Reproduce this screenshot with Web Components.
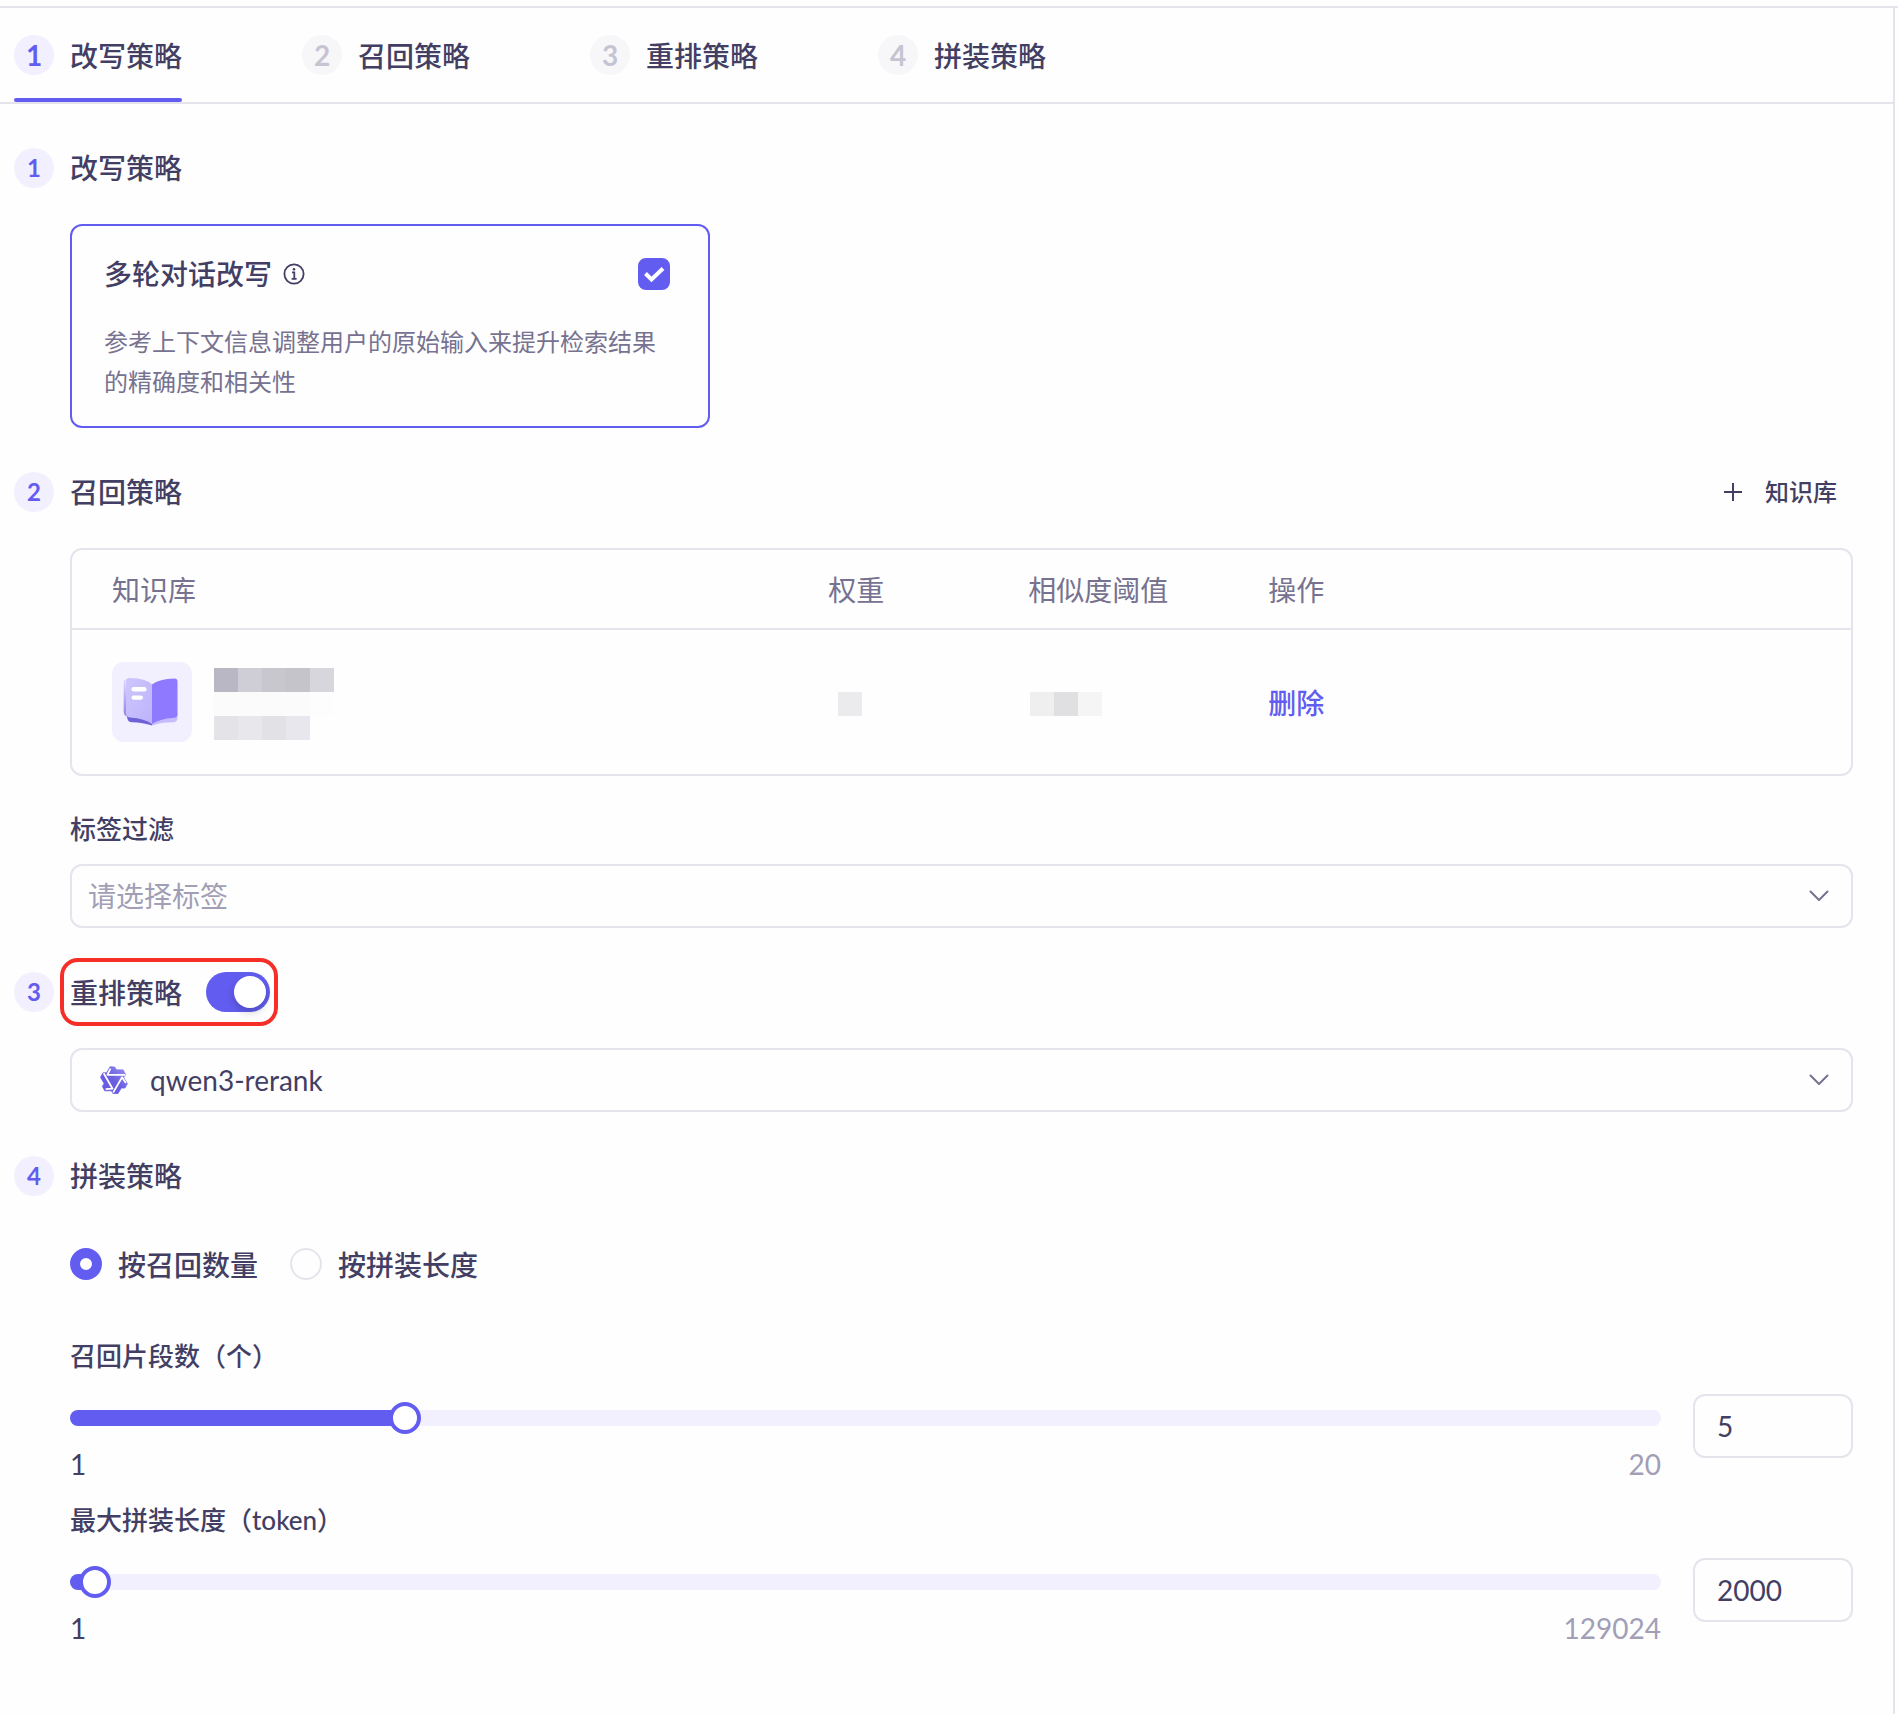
<!DOCTYPE html>
<html lang="zh-CN">
<head>
<meta charset="utf-8">
<meta name="viewport" content="width=device-width, initial-scale=1">
<title>检索策略</title>
<style>
  :root {
    --primary: #625df0;
    --primary-soft: #f2f0fe;
    --ink: #433f64;
    --ink-2: #767290;
    --ink-3: #a19eb5;
    --line: #e5e4ec;
    --surface: #fefefe;
  }
  html { background: var(--surface); }
  body {
    margin: 0;
    color: var(--ink);
    font-family: Lato, "Noto Sans CJK SC", sans-serif;
    font-size: 28px;
    line-height: 40px;
  }
</style>
</head>
<body>
<strategy-page>
  <strategy-tabs slot="tabs">
    <strategy-tab step="1" active>改写策略</strategy-tab>
    <strategy-tab step="2">召回策略</strategy-tab>
    <strategy-tab step="3">重排策略</strategy-tab>
    <strategy-tab step="4">拼装策略</strategy-tab>
  </strategy-tabs>

  <strategy-section step="1" id="step-1">
    <span slot="title">改写策略</span>
    <option-card>
      <span slot="title">多轮对话改写</span>
      参考上下文信息调整用户的原始输入来提升检索结果的精确度和相关性
    </option-card>
  </strategy-section>

  <strategy-section step="2" id="step-2">
    <span slot="title">召回策略</span>
    <add-button slot="action">知识库</add-button>
    <knowledge-table></knowledge-table>
    <select-field label="标签过滤" value="请选择标签" placeholder></select-field>
  </strategy-section>

  <strategy-section step="3" id="step-3">
    <switch-title slot="title">重排策略</switch-title>
    <select-field name="重排策略" value="qwen3-rerank"><qwen-logo slot="icon"></qwen-logo></select-field>
  </strategy-section>

  <strategy-section step="4" id="step-4">
    <span slot="title">拼装策略</span>
    <mode-radios></mode-radios>
    <slider-field label="召回片段数（个）" min="1" max="20" value="5"></slider-field>
    <slider-field label="最大拼装长度（token）" min="1" max="129024" value="2000"></slider-field>
  </strategy-section>
</strategy-page>

<script>
const base = '*,*::before,*::after{box-sizing:border-box}';

function define(name, render, setup) {
  customElements.define(name, class extends HTMLElement {
    connectedCallback() {
      if (this.shadowRoot) return;
      const root = this.attachShadow({ mode: 'open' });
      const template = document.createElement('template');
      template.innerHTML = render(this);
      root.append(template.content.cloneNode(true));
      if (setup) setup(root, this);
    }
  });
}

define('strategy-page', () => `
  <style>${base}
    :host { display: block; padding-top: 6px; }
    .frame { border-top: 2px solid var(--line); }
    .panel { margin-right: 3px; border-right: 2px solid var(--line); min-height: calc(100vh - 8px); }
    main { display: flex; flex-direction: column; gap: 44px; padding: 44px 40px 44px 14px; }
  </style>
  <div class="frame"><div class="panel">
    <slot name="tabs"></slot>
    <main><slot></slot></main>
  </div></div>`);

define('strategy-tabs', () => `
  <style>${base}
    :host { display: block; border-bottom: 2px solid var(--line); }
    nav { display: flex; gap: 120px; padding: 0 14px; }
  </style>
  <nav><slot></slot></nav>`);

define('step-badge', () => `
  <style>${base}
    :host {
      display: flex; align-items: center; justify-content: center; flex: none;
      width: 40px; height: 40px; border-radius: 50%;
      background: var(--primary-soft); color: var(--primary);
      font-weight: 700; font-size: 24px; line-height: 40px;
    }
    :host([large]) { font-size: 28px; }
    :host([muted]) { background: #f7f7f9; color: #c6c4d3; }
  </style>
  <slot></slot>`);

define('strategy-tab', el => `
  <style>${base}
    :host { display: block; }
    a {
      position: relative; display: flex; align-items: center; gap: 16px;
      height: 94px; color: inherit; text-decoration: none; font-weight: 500;
    }
    .text { padding-top: 2px; }
    :host([active]) a::after {
      content: ""; position: absolute; left: 0; right: 0; bottom: 0;
      height: 4px; border-radius: 2px; background: var(--primary);
    }
  </style>
  <a href="#step-${el.getAttribute('step')}">
    <step-badge large ${el.hasAttribute('active') ? '' : 'muted'}>${el.getAttribute('step')}</step-badge>
    <span class="text"><slot></slot></span>
  </a>`);

define('strategy-section', el => `
  <style>${base}
    :host { display: block; }
    header { display: flex; align-items: center; gap: 16px; height: 40px; }
    h2 { margin: 0; flex: 1; font-size: 28px; line-height: 42px; font-weight: 500; }
    .body { padding: 36px 0 0 56px; }
  </style>
  <header>
    <step-badge>${el.getAttribute('step')}</step-badge>
    <h2><slot name="title"></slot></h2>
    <slot name="action"></slot>
  </header>
  <div class="body"><slot></slot></div>`);

define('option-card', () => `
  <style>${base}
    :host { display: block; max-width: 640px; }
    label {
      display: block; padding: 28px 38px 24px 32px;
      border: 2px solid var(--primary); border-radius: 12px; cursor: pointer;
    }
    .head { display: flex; align-items: center; gap: 10px; height: 40px; font-weight: 500; }
    .info { width: 24px; height: 24px; margin-right: auto; }
    .tick { display: grid; }
    .tick > * { grid-area: 1 / 1; }
    input {
      appearance: none; margin: 0; width: 32px; height: 32px;
      border: 2px solid var(--line); border-radius: 8px;
    }
    input:checked { background: var(--primary); border-color: var(--primary); }
    .tick svg { width: 32px; height: 32px; pointer-events: none; }
    input:not(:checked) + svg { visibility: hidden; }
    p { margin: 28px -6px 0 0; font-size: 24px; line-height: 40px; color: var(--ink-2); }
  </style>
  <label>
    <span class="head">
      <slot name="title"></slot>
      <svg class="info" viewBox="0 0 24 24" fill="none" stroke="currentColor" stroke-width="1.8">
        <circle cx="12" cy="12" r="9.6"/>
        <path d="M10 10.4h2.3v6.2M9.6 16.8h5"/>
        <circle cx="12" cy="7.2" r="1.3" fill="currentColor" stroke="none"/>
      </svg>
      <span class="tick">
        <input type="checkbox" checked>
        <svg viewBox="0 0 32 32" fill="none" stroke="#fff" stroke-width="4"><path d="M7.5 15.5l6 6L25 10.5"/></svg>
      </span>
    </span>
    <p><slot></slot></p>
  </label>`);

define('add-button', () => `
  <style>${base}
    :host { display: block; }
    button {
      display: flex; align-items: center; gap: 21px; padding: 0 16px 0 0;
      border: 0; background: none; color: inherit; cursor: pointer;
      font: inherit; font-weight: 500; font-size: 24px; line-height: 40px;
    }
    svg { width: 22px; height: 22px; }
  </style>
  <button type="button">
    <svg viewBox="0 0 22 22" stroke="currentColor" stroke-width="2"><path d="M11 2v18M2 11h18"/></svg>
    <slot></slot>
  </button>`);

define('pixel-mask', el => `
  <style>${base}
    :host { display: flex; }
    i { width: 24px; height: 24px; }
  </style>
  ${el.getAttribute('shades').split(' ').map(c => `<i style="background:${c}"></i>`).join('')}`);

define('book-icon', () => `
  <style>:host{display:block;flex:none} svg{display:block;width:80px;height:80px}</style>
  <svg viewBox="0 0 80 80">
    <defs>
      <linearGradient id="page" x1="0" y1="0" x2="1" y2="1">
        <stop offset="0" stop-color="#cdc6fd"/><stop offset="1" stop-color="#bdb3fb"/>
      </linearGradient>
      <linearGradient id="edge" x1="0" y1="0" x2="0" y2="1">
        <stop offset="0" stop-color="#ddd8fe"/><stop offset="1" stop-color="#8f82ea"/>
      </linearGradient>
    </defs>
    <rect width="80" height="80" rx="12" fill="#f2effe"/>
    <path d="M14 51 L15.5 57 Q16.500 60.200 20 60.300 Q31 60.500 40 63.500 L40 60 Z" fill="#6f61d6"/>
    <path d="M65.500 51 V56 Q65.500 60 61.500 60.200 Q48 60.300 40 63.500 L40 59 Z" fill="#c5bcfd"/>
    <path d="M13.500 17 Q11.700 18 11.700 21 V50 Q11.800 53 14.500 54.500 Z" fill="url(#edge)"/>
    <path d="M17 16 Q33 15.600 40 22.500 V62 Q33 56.500 18 55.500 Q14 55 14 51 V19 Q14 16.200 17 16Z" fill="url(#page)"/>
    <path d="M62.500 16.500 Q47 17 40 22.500 V62 Q47 57 62 55.800 Q65.500 55.400 65.500 52 V19.500 Q65.500 16.500 62.500 16.500Z" fill="#8f79ff"/>
    <rect x="19.500" y="25" width="15" height="4.500" rx="2.200" fill="#fff"/>
    <rect x="19.500" y="33.500" width="11.500" height="4.200" rx="2.100" fill="#fff"/>
  </svg>`);

define('knowledge-table', () => `
  <style>${base}
    :host { display: block; }
    table {
      width: 100%; table-layout: fixed; border-collapse: separate; border-spacing: 0;
      border: 2px solid var(--line); border-radius: 12px;
    }
    col.weight { width: 200px; }
    col.threshold { width: 240px; }
    col.action { width: 35%; }
    th, td { padding: 2px 0 0 40px; text-align: left; vertical-align: middle; }
    th { height: 80px; border-bottom: 2px solid var(--line); color: var(--ink-2); font-weight: 400; }
    td { height: 144px; }
    td:first-child { padding-top: 0; }
    .base { display: flex; align-items: center; gap: 22px; }
    .lines { display: flex; flex-direction: column; padding-top: 4px; }
    .weight-mask { padding: 2px 0 0 10px; }
    .threshold-mask { padding: 2px 0 0 2px; }
    a { color: var(--primary); text-decoration: none; font-weight: 500; }
  </style>
  <table>
    <colgroup><col><col class="weight"><col class="threshold"><col class="action"></colgroup>
    <thead><tr><th>知识库</th><th>权重</th><th>相似度阈值</th><th>操作</th></tr></thead>
    <tbody><tr>
      <td><div class="base"><book-icon></book-icon><div class="lines">
        <pixel-mask shades="#b9b7c3 #cfcdd5 #c8c7cd #c5c4ca #d7d6dc"></pixel-mask>
        <pixel-mask shades="#fbfbfc #fbfbfc #fbfbfc #fbfbfc #fdfdfd"></pixel-mask>
        <pixel-mask shades="#e4e3e8 #e8e7ec #e2e1e6 #e8e7ed"></pixel-mask>
      </div></div></td>
      <td><pixel-mask class="weight-mask" shades="#ebebed"></pixel-mask></td>
      <td><pixel-mask class="threshold-mask" shades="#efefef #e0e0e2 #f5f5f5"></pixel-mask></td>
      <td><a href="#step-2">删除</a></td>
    </tr></tbody>
  </table>`);

define('qwen-logo', () => `
  <style>:host{display:block} svg{display:block;width:28px;height:28px}</style>
  <svg viewBox="0 0 24 24">
    <defs>
      <linearGradient id="q" x1="1" y1="0" x2="0" y2="1">
        <stop offset="0" stop-color="#9a93f4"/><stop offset=".5" stop-color="#6a5fe0"/><stop offset="1" stop-color="#6558e8"/>
      </linearGradient>
      <path id="arm" d="M9 2.200 L6.300 7.500 H21.600"/>
    </defs>
    <path fill="url(#q)" d="M12.600 .8 L14.100 3.300 H19.900 L22 7.300 L20.400 9.900 L23.500 15.200 L21.400 18.900 H18.300 L15.300 23.800 H11.200 L9.800 21.300 H4.100 L2 17.600 L3.500 15 L.4 9.600 L2.600 5.800 H5.600 L8.600 .6 Z" stroke="url(#q)" stroke-width=".6" stroke-linejoin="round"/>
    <g fill="none" stroke="#fff" stroke-width="1.500" stroke-linejoin="round">
      <use href="#arm"/>
      <use href="#arm" transform="rotate(120 12 12.200)"/>
      <use href="#arm" transform="rotate(240 12 12.200)"/>
    </g>
  </svg>`);

define('select-field', el => {
  const label = el.getAttribute('label');
  const value = el.getAttribute('value');
  const aria = label ? '' : `aria-label="${el.getAttribute('name')}"`;
  return `
  <style>${base}
    :host { display: block; }
    label { display: block; padding-top: 33px; margin-bottom: 15px; font-size: 26px; font-weight: 500; }
    .box { display: grid; grid-template-columns: auto 1fr auto; align-items: center; }
    select {
      grid-area: 1 / 1 / 2 / 4; appearance: none; width: 100%; height: 64px; margin: 0;
      padding: 0 64px 0 16px; border: 2px solid var(--line); border-radius: 12px;
      background: transparent; color: inherit; font: inherit;
    }
    :host([placeholder]) select { color: var(--ink-3); }
    :host([name]) select { padding-left: 78px; }
    .icon { grid-area: 1 / 1; padding-left: 30px; pointer-events: none; }
    .arrow { grid-area: 1 / 3; width: 24px; height: 24px; margin-right: 22px; color: var(--ink-2); pointer-events: none; }
  </style>
  ${label ? `<label for="field">${label}</label>` : ''}
  <div class="box">
    <select id="field" ${aria}><option>${value}</option></select>
    <span class="icon"><slot name="icon"></slot></span>
    <svg class="arrow" viewBox="0 0 24 24" fill="none" stroke="currentColor" stroke-width="2" stroke-linecap="round" stroke-linejoin="round"><path d="M3.500 7.500l8.500 8.500 8.500-8.500"/></svg>
  </div>`;
});

define('switch-title', () => `
  <style>${base}
    :host { display: flex; }
    label { position: relative; display: flex; align-items: center; gap: 24px; height: 40px; cursor: pointer; }
    label::after {
      content: ""; position: absolute; inset: -14px -8px -14px -10px;
      border: 4px solid #f52f27; border-radius: 18px; pointer-events: none;
    }
    .text { padding-top: 2px; line-height: 40px; }
    input {
      appearance: none; display: flex; justify-content: flex-start; margin: 0; padding: 4px;
      width: 64px; height: 40px; border-radius: 20px; background: #c6c4d3;
    }
    input:checked { justify-content: flex-end; background: var(--primary); }
    input::before {
      content: ""; width: 32px; height: 32px; border-radius: 50%;
      background: #fff; box-shadow: 0 4px 8px rgba(0, 0, 0, .2);
    }
  </style>
  <label><span class="text"><slot></slot></span><input type="checkbox" role="switch" checked></label>`);

define('mode-radios', () => `
  <style>${base}
    :host { display: flex; gap: 32px; height: 64px; align-items: center; margin-bottom: 40px; font-weight: 500; }
    label { display: flex; align-items: center; gap: 16px; cursor: pointer; }
    span { padding-top: 2px; }
    input {
      appearance: none; margin: 0; width: 32px; height: 32px;
      border: 2px solid var(--line); border-radius: 50%;
    }
    input:checked { border: 10px solid var(--primary); }
  </style>
  <label><input type="radio" name="mode" checked><span>按召回数量</span></label>
  <label><input type="radio" name="mode"><span>按拼装长度</span></label>`);

define('slider-field', el => {
  const label = el.getAttribute('label');
  const min = el.getAttribute('min'), max = el.getAttribute('max'), value = el.getAttribute('value');
  return `
  <style>${base}
    :host { display: block; }
    .label { display: block; font-size: 26px; font-weight: 500; margin-bottom: 18px; }
    .row { display: flex; align-items: flex-start; gap: 32px; padding-bottom: 16px; }
    .slider { flex: 1; padding-top: 8px; }
    .rail { display: grid; align-items: center; }
    .track { grid-area: 1 / 1; height: 16px; border-radius: 8px; background: var(--primary-soft); overflow: hidden; }
    .fill { height: 16px; width: var(--ratio); background: var(--primary); }
    input[type="range"] {
      grid-area: 1 / 1; appearance: none; height: 32px; margin: 0 -16px;
      background: transparent; z-index: 1;
    }
    input[type="range"]::-webkit-slider-thumb {
      appearance: none; width: 32px; height: 32px; border-radius: 50%;
      border: 4px solid var(--primary); background: #fff;
    }
    .ends { display: flex; justify-content: space-between; margin-top: 10px; }
    .max { color: var(--ink-3); }
    input[type="number"] {
      appearance: textfield; width: 160px; height: 64px; margin: 0; padding: 0 22px;
      border: 2px solid var(--line); border-radius: 12px;
      background: transparent; color: inherit; font: inherit;
    }
    input[type="number"]::-webkit-inner-spin-button { appearance: none; margin: 0; }
  </style>
  <label class="label" for="number">${label}</label>
  <div class="row">
    <div class="slider">
      <div class="rail">
        <div class="track"><div class="fill"></div></div>
        <input type="range" aria-label="${label}" min="${min}" max="${max}" value="${value}">
      </div>
      <div class="ends"><span>${min}</span><span class="max">${max}</span></div>
    </div>
    <input type="number" id="number" min="${min}" max="${max}" value="${value}">
  </div>`;
}, (root, el) => {
  const range = root.querySelector('[type="range"]');
  const number = root.querySelector('[type="number"]');
  const sync = () => {
    const ratio = (range.value - range.min) / (range.max - range.min);
    el.style.setProperty('--ratio', `${ratio * 100}%`);
  };
  range.addEventListener('input', () => { number.value = range.value; sync(); });
  number.addEventListener('input', () => { range.value = number.value; sync(); });
  sync();
});
</script>
</body>
</html>
